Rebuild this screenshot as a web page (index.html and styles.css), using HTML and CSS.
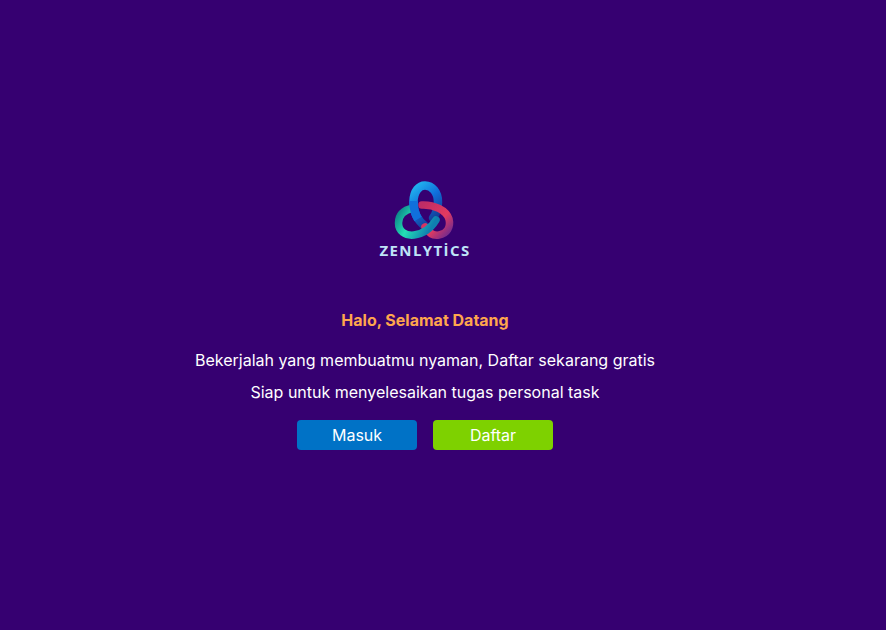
FILE: index.html
```html
<!DOCTYPE html>
<html lang="id">
<head>
<meta charset="utf-8">
<title>Zenlytics</title>
<link rel="stylesheet" href="styles.css">
</head>
<body>
<main class="welcome">
  <div class="logo">
    <svg class="logo-mark" width="70" height="61" viewBox="0 0 70 61" aria-hidden="true">
      <defs>
        <linearGradient id="blue" x1="0" y1="0" x2="0.5" y2="1">
          <stop offset="0" stop-color="#22b6ee"/>
          <stop offset="0.5" stop-color="#1070dc"/>
          <stop offset="1" stop-color="#143c96"/>
        </linearGradient>
        <linearGradient id="teal" x1="0" y1="0" x2="1" y2="0.4">
          <stop offset="0" stop-color="#0c7f86"/>
          <stop offset="0.45" stop-color="#24e0b4"/>
          <stop offset="1" stop-color="#0f7fb0"/>
        </linearGradient>
        <linearGradient id="red" x1="0" y1="0" x2="1" y2="1">
          <stop offset="0" stop-color="#c02c66"/>
          <stop offset="0.6" stop-color="#e23a60"/>
          <stop offset="1" stop-color="#6e2a90"/>
        </linearGradient>
      </defs>
      <path d="M36 47C28 41 23 33 23.500 21C24 11 29 5.500 35 5.500C42 5.500 48 12 48 22C48 29 46 34 43 38" fill="none" stroke="url(#blue)" stroke-width="8.500" stroke-linecap="round"/>
      <path d="M32 25C44 24.500 56 30 59 39C61 47 57 54 49 55C43 56 38 52 35 47" fill="none" stroke="url(#red)" stroke-width="7.500" stroke-linecap="round"/>
      <path d="M23 28C14 30 8.500 35 8.500 43C8.500 51 15 56 24 55C33 54 41 48 46 40" fill="none" stroke="url(#teal)" stroke-width="7.500" stroke-linecap="round"/>
      <path d="M23.500 21C23.500 28 25 34 28 39" fill="none" stroke="#1070dc" stroke-width="8.500"/>
    </svg>
    <span class="logo-name">ZENLYTİCS</span>
  </div>
  <h1 class="title">Halo, Selamat Datang</h1>
  <p class="line">Bekerjalah yang membuatmu nyaman, Daftar sekarang gratis</p>
  <p class="line">Siap untuk menyelesaikan tugas personal task</p>
  <div class="actions">
    <button class="btn btn-login" type="button">Masuk</button>
    <button class="btn btn-register" type="button">Daftar</button>
  </div>
</main>
</body>
</html>
```

FILE: styles.css
```css
html, body {
  margin: 0;
  height: 100%;
}

body {
  background: #360071;
  color: #fff;
  font-family: Inter, "Noto Sans", sans-serif;
}

.welcome {
  box-sizing: border-box;
  height: 630px;
  padding: 180px 36px 0 0;
  display: flex;
  flex-direction: column;
  align-items: center;
}

.logo {
  height: 80px;
  width: 90px;
  display: flex;
  flex-direction: column;
  align-items: center;
  margin-bottom: 50px;
}

.logo-mark {
  display: block;
  flex: none;
}

.logo-name {
  font-family: "Open Sans", Inter, sans-serif;
  font-size: 15px;
  line-height: 16px;
  font-weight: 700;
  letter-spacing: 1.4px;
  color: #bfe3f7;
  white-space: nowrap;
  margin-top: 1px;
}

.title {
  margin: 0 0 20px;
  font-size: 16px;
  line-height: 20px;
  font-weight: 700;
  color: #ffa64d;
}

.line {
  margin: 0 0 12px;
  font-size: 16px;
  line-height: 20px;
  font-weight: 400;
}

.actions {
  display: flex;
  gap: 16px;
  margin-top: 6px;
}

.btn {
  width: 120px;
  height: 30px;
  border: 0;
  border-radius: 4px;
  padding: 0;
  color: #fff;
  font-family: inherit;
  font-size: 16px;
}

.btn-login {
  background: #0072c6;
}

.btn-register {
  background: #7ed100;
}
```
